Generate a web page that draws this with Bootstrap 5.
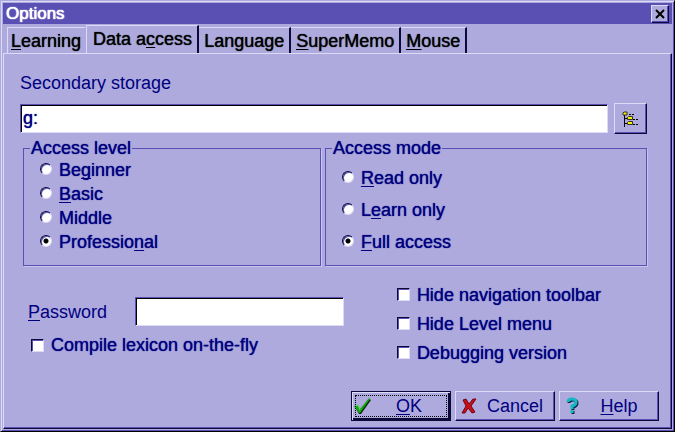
<!DOCTYPE html>
<html lang="en">
<head>
<meta charset="utf-8">
<meta name="viewport" content="width=device-width, initial-scale=1">
<title>Options</title>
<link href="https://cdn.jsdelivr.net/npm/bootstrap@5.3.0/dist/css/bootstrap.min.css" rel="stylesheet">
<style>
:root { --face: #aeaadd; --light: #dcdaf6; --shade: #5a50b4; --ink: #00007f; --dark: #0c0838; }
body { font: 18px/24px "Liberation Sans", Arial, sans-serif; background: var(--face); color: var(--ink); }
u { text-underline-offset: 2px; text-decoration-thickness: 1px; text-decoration-skip-ink: none; }
.dialog { border: 1px solid; border-color: var(--face) #000 #000 var(--face); box-shadow: inset 1px 1px var(--light), inset -1px -1px var(--shade); padding: 2px; }
.titlebar { background: var(--shade); color: #fff; height: 21px; padding: 0 3px; font-size: 17px; line-height: 21px; }
.heavy { text-shadow: 0 0 1px currentColor; }
.titlebar .heavy { text-shadow: 0 0 1px #fff, 0 0 1px #fff; }
.bevel { background: var(--face); color: var(--ink); border: 1px solid; border-color: var(--light) var(--dark) var(--dark) var(--light); box-shadow: inset -1px -1px var(--shade); border-radius: 0; }
.close-box { width: 18px; height: 18px; padding: 0; }
.tabs { padding: 1px 0 0 4px; height: 29px; }
.tab-item { height: 26px; border: 0; border-top: 1px solid var(--light); border-right: 2px solid var(--dark); background: none; color: #000; padding: 1px 5px 0 5px; line-height: 24px; border-radius: 0; }
.tab-item:first-child { border-right-color: var(--face); border-left: 1px solid var(--light); padding: 1px 3px 0 3px; }
.tab-item.active { height: 29px; background: var(--face); border-left: 1px solid var(--light); padding: 0 5px 2px 6px; margin-bottom: -1px; }
.panel { border: 1px solid; border-color: var(--light) var(--dark) var(--dark) var(--light); box-shadow: inset -1px -1px var(--shade); padding: 17px 12px 7px 16px; }
.body-area { padding-right: 12px; }
.field { height: 29px; border: 1px solid; border-color: var(--shade) var(--light) var(--light) var(--shade); box-shadow: inset 1px 1px #000; background: #fff; color: var(--ink); padding: 0 2px; border-radius: 0; outline: 0; min-width: 0; }
.storage-row { gap: 6px; }
.browse { width: 33px; height: 31px; padding: 0; }
.groups { margin-left: 3px; }
.group { border: 1px solid var(--shade); box-shadow: 1px 1px #c8c4ee; padding: 0 16px 7px; min-width: 0; outline: 0; }
.group legend { float: none; width: auto; font-size: 18px; line-height: 20px; margin: 0 0 0 -10px; padding: 0 1px; background: var(--face); }
.group-level { flex: 296 1 0; }
.group-mode { flex: 323 1 0; }
.group-mode .choices { padding-top: 4px; }
.group-mode .choice { height: 32px; }
.choice { display: flex; align-items: center; gap: 7px; height: 24px; white-space: nowrap; }
.choice input { appearance: none; flex: none; margin: 0; width: 12px; height: 12px; background: #fff; border: 1px solid; border-color: var(--dark) var(--light) var(--light) var(--dark); }
.choice input[type=radio] { border-radius: 50%; margin-top: -2px; box-shadow: inset 1px 1px var(--shade); }
.choice input[type=radio]:checked { background: radial-gradient(circle, #000 2px, #fff 3px); }
.choice input[type=checkbox] { width: 13px; height: 13px; box-shadow: inset 1px 1px var(--shade); }
.choice input[type=checkbox]:checked { background: radial-gradient(#000 3px, #fff 4px); }
.lower { padding: 14px 46px 0 8px; }
.password-row { gap: 28px; padding-top: 17px; margin-bottom: 7px; }
.password { width: 209px; }
.compile { margin-left: 3px; }
.flags .choice { height: 29px; }
.action { width: 100px; height: 30px; padding: 0 2px; display: flex; align-items: center; }
.action svg { flex: none; }
.action span { flex: 1; text-align: center; padding-right: 2px; }
.default { border-color: var(--dark); box-shadow: inset 1px 1px var(--light), inset -2px -2px var(--dark); outline: 1px dotted #000; outline-offset: -5px; }
</style>
<script src="https://cdn.jsdelivr.net/npm/bootstrap@5.3.0/dist/js/bootstrap.bundle.min.js"></script>
</head>
<body>
<main class="dialog d-flex flex-column min-vh-100">
  <header class="titlebar d-flex align-items-center justify-content-between">
    <span class="heavy">Options</span>
    <button type="button" class="bevel close-box d-flex align-items-center justify-content-center" aria-label="Close">
      <svg width="10" height="10" viewBox="0 0 10 10" stroke="#000" stroke-width="2"><path d="M1 1l8 8M9 1L1 9"/></svg>
    </button>
  </header>
  <div class="tabs d-flex align-items-end" role="tablist">
    <button type="button" role="tab" class="tab-item heavy"><u>L</u>earning</button>
    <button type="button" role="tab" aria-selected="true" class="tab-item active heavy">Data a<u>c</u>cess</button>
    <button type="button" role="tab" class="tab-item heavy">Language</button>
    <button type="button" role="tab" class="tab-item heavy"><u>S</u>uperMemo</button>
    <button type="button" role="tab" class="tab-item heavy"><u>M</u>ouse</button>
  </div>
  <form class="panel flex-grow-1 d-flex flex-column">
    <div class="body-area">
      <label for="storage">Secondary storage</label>
      <div class="d-flex align-items-center mt-2 storage-row">
        <input id="storage" class="field flex-grow-1 heavy" type="text" value="g:">
        <button type="button" class="bevel browse d-flex align-items-center justify-content-center" aria-label="Browse folders">
          <svg width="20" height="20" viewBox="0 0 20 20"><path d="M3.500 5v13M3 9.500h4M3 14.500h4" stroke="#000" fill="none"/><path d="M8 5.500h6M12 10.500h6M12 15.500h6" stroke="#000" stroke-dasharray="2 1"/><path d="M2 4l1-1h3v3H2zM6.500 8.500l1-1h4v3h-5zM6.500 13.500l1-1h4v3h-5z" fill="#f4f000" stroke="#332"/></svg>
        </button>
      </div>
      <div class="d-flex mt-1 groups">
        <fieldset class="group group-level me-1">
          <legend class="heavy">Access level</legend>
          <div class="heavy">
            <label class="choice"><input type="radio" name="level"><span>Be<u>g</u>inner</span></label>
            <label class="choice"><input type="radio" name="level"><span><u>B</u>asic</span></label>
            <label class="choice"><input type="radio" name="level"><span>Middle</span></label>
            <label class="choice"><input type="radio" name="level" checked><span>Professio<u>n</u>al</span></label>
          </div>
        </fieldset>
        <fieldset class="group group-mode">
          <legend class="heavy">Access mode</legend>
          <div class="choices heavy">
            <label class="choice"><input type="radio" name="mode"><span><u>R</u>ead only</span></label>
            <label class="choice"><input type="radio" name="mode"><span>L<u>e</u>arn only</span></label>
            <label class="choice"><input type="radio" name="mode" checked><span><u>F</u>ull access</span></label>
          </div>
        </fieldset>
      </div>
      <div class="lower d-flex justify-content-between">
        <div>
          <div class="password-row d-flex align-items-center justify-content-between">
            <label for="password"><u>P</u>assword</label>
            <input id="password" class="field password" type="password">
          </div>
          <label class="choice heavy compile"><input type="checkbox"><span>Compile lexicon on-the-fly</span></label>
        </div>
        <div class="flags heavy">
          <label class="choice"><input type="checkbox"><span>Hide navigation toolbar</span></label>
          <label class="choice"><input type="checkbox"><span>Hide Level menu</span></label>
          <label class="choice"><input type="checkbox"><span>Debugging version</span></label>
        </div>
      </div>
    </div>
    <div class="d-flex justify-content-end gap-1 mt-auto">
      <button type="submit" class="bevel action default">
        <svg width="18" height="18" viewBox="0 0 18 18"><path d="M1 10l3-1 2 4L15 2l2 1L7 17H5z" fill="#0b2a0b"/><path d="M0 9l4-1 2 4L15 1l1 1L6 16H5z" fill="#12a812"/><path d="M2 9l2-1 2 5" stroke="#5be05b" fill="none"/></svg>
        <span><u>O</u>K</span>
      </button>
      <button type="button" class="bevel action">
        <svg width="22" height="18" viewBox="0 0 22 18"><path d="M5 3l3-1 3 5 4-5h3l-5 7 4 6-3 1-4-5-3 5H4l4-7z" fill="#c80c18" stroke="#700818"/></svg>
        <span>Cancel</span>
      </button>
      <button type="button" class="bevel action">
        <svg width="22" height="18" viewBox="0 0 22 18" fill="none"><path d="M7 6q0-3 4-3t4 3-4 4v3m0 1v3" stroke="#124" stroke-width="3"/><path d="M6 5q0-3 4-3t4 3-4 4v3m0 1v3" stroke="#12b8c4" stroke-width="3"/></svg>
        <span><u>H</u>elp</span>
      </button>
    </div>
  </form>
</main>
</body>
</html>
